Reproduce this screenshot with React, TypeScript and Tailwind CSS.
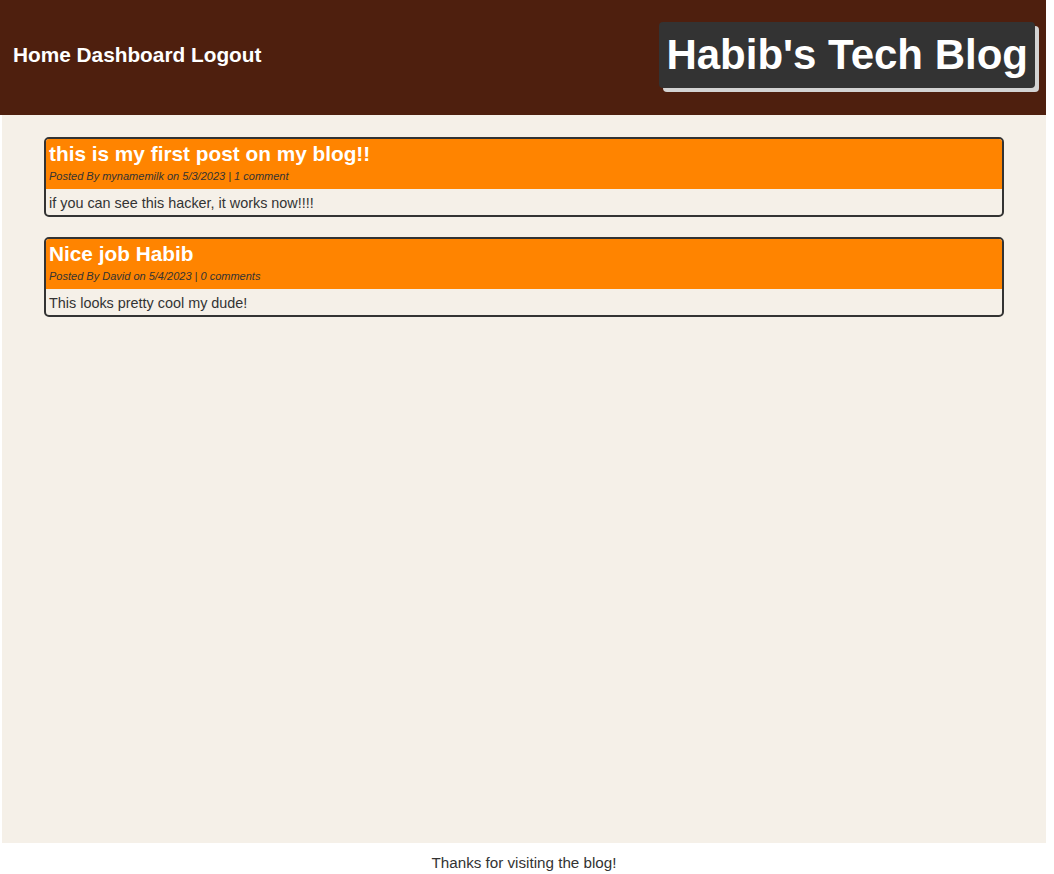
const posts = [
  {
    title: "this is my first post on my blog!!",
    author: "mynamemilk",
    date: "5/3/2023",
    comments: "1 comment",
    body: "if you can see this hacker, it works now!!!!",
  },
  {
    title: "Nice job Habib",
    author: "David",
    date: "5/4/2023",
    comments: "0 comments",
    body: "This looks pretty cool my dude!",
  },
];

function PostCard({ post }: { post: (typeof posts)[number] }) {
  return (
    <div className="rounded-[5px] border-2 border-[#333333] overflow-hidden">
      <div className="bg-[#ff8400] px-[3px] pt-[2px] pb-[5px]">
        <h2 className="text-[20.8px] leading-[26px] font-bold text-white">{post.title}</h2>
        <p className="mt-[1px] text-[11px] leading-[16px] italic text-[#333333]">
          Posted By {post.author} on {post.date} | {post.comments}
        </p>
      </div>
      <div className="px-[3px] pt-[4px] pb-[2px] text-[14.4px] leading-[20px] text-[#333333]">{post.body}</div>
    </div>
  );
}

export default function App() {
  return (
    <div className="w-[1046px] bg-white font-['Liberation_Sans',Arial,sans-serif]">
      <header className="h-[115px] bg-[#4e1f0e] flex items-center justify-between pl-[13px] pr-[11px] pb-[6px]">
        <nav className="text-[20.8px] font-bold text-white">
          <a href="#">Home</a> <a href="#">Dashboard</a> <a href="#">Logout</a>
        </nav>
        <h1 className="bg-[#333333] rounded-[4px] px-[7px] py-[9px] text-[42px] leading-[48px] font-bold text-white shadow-[4px_4px_0_#d3d3d3]">
          Habib's Tech Blog
        </h1>
      </header>
      <main className="ml-[2px] min-h-[728px] bg-[#f5f0e8] px-[42px] pt-[22px] flex flex-col gap-[20px]">
        {posts.map((p) => (
          <PostCard key={p.title} post={p} />
        ))}
      </main>
      <footer className="ml-[2px] pt-[10px] pb-[6px] text-center text-[15.2px] leading-[20px] text-[#333333]">
        Thanks for visiting the blog!
      </footer>
    </div>
  );
}
